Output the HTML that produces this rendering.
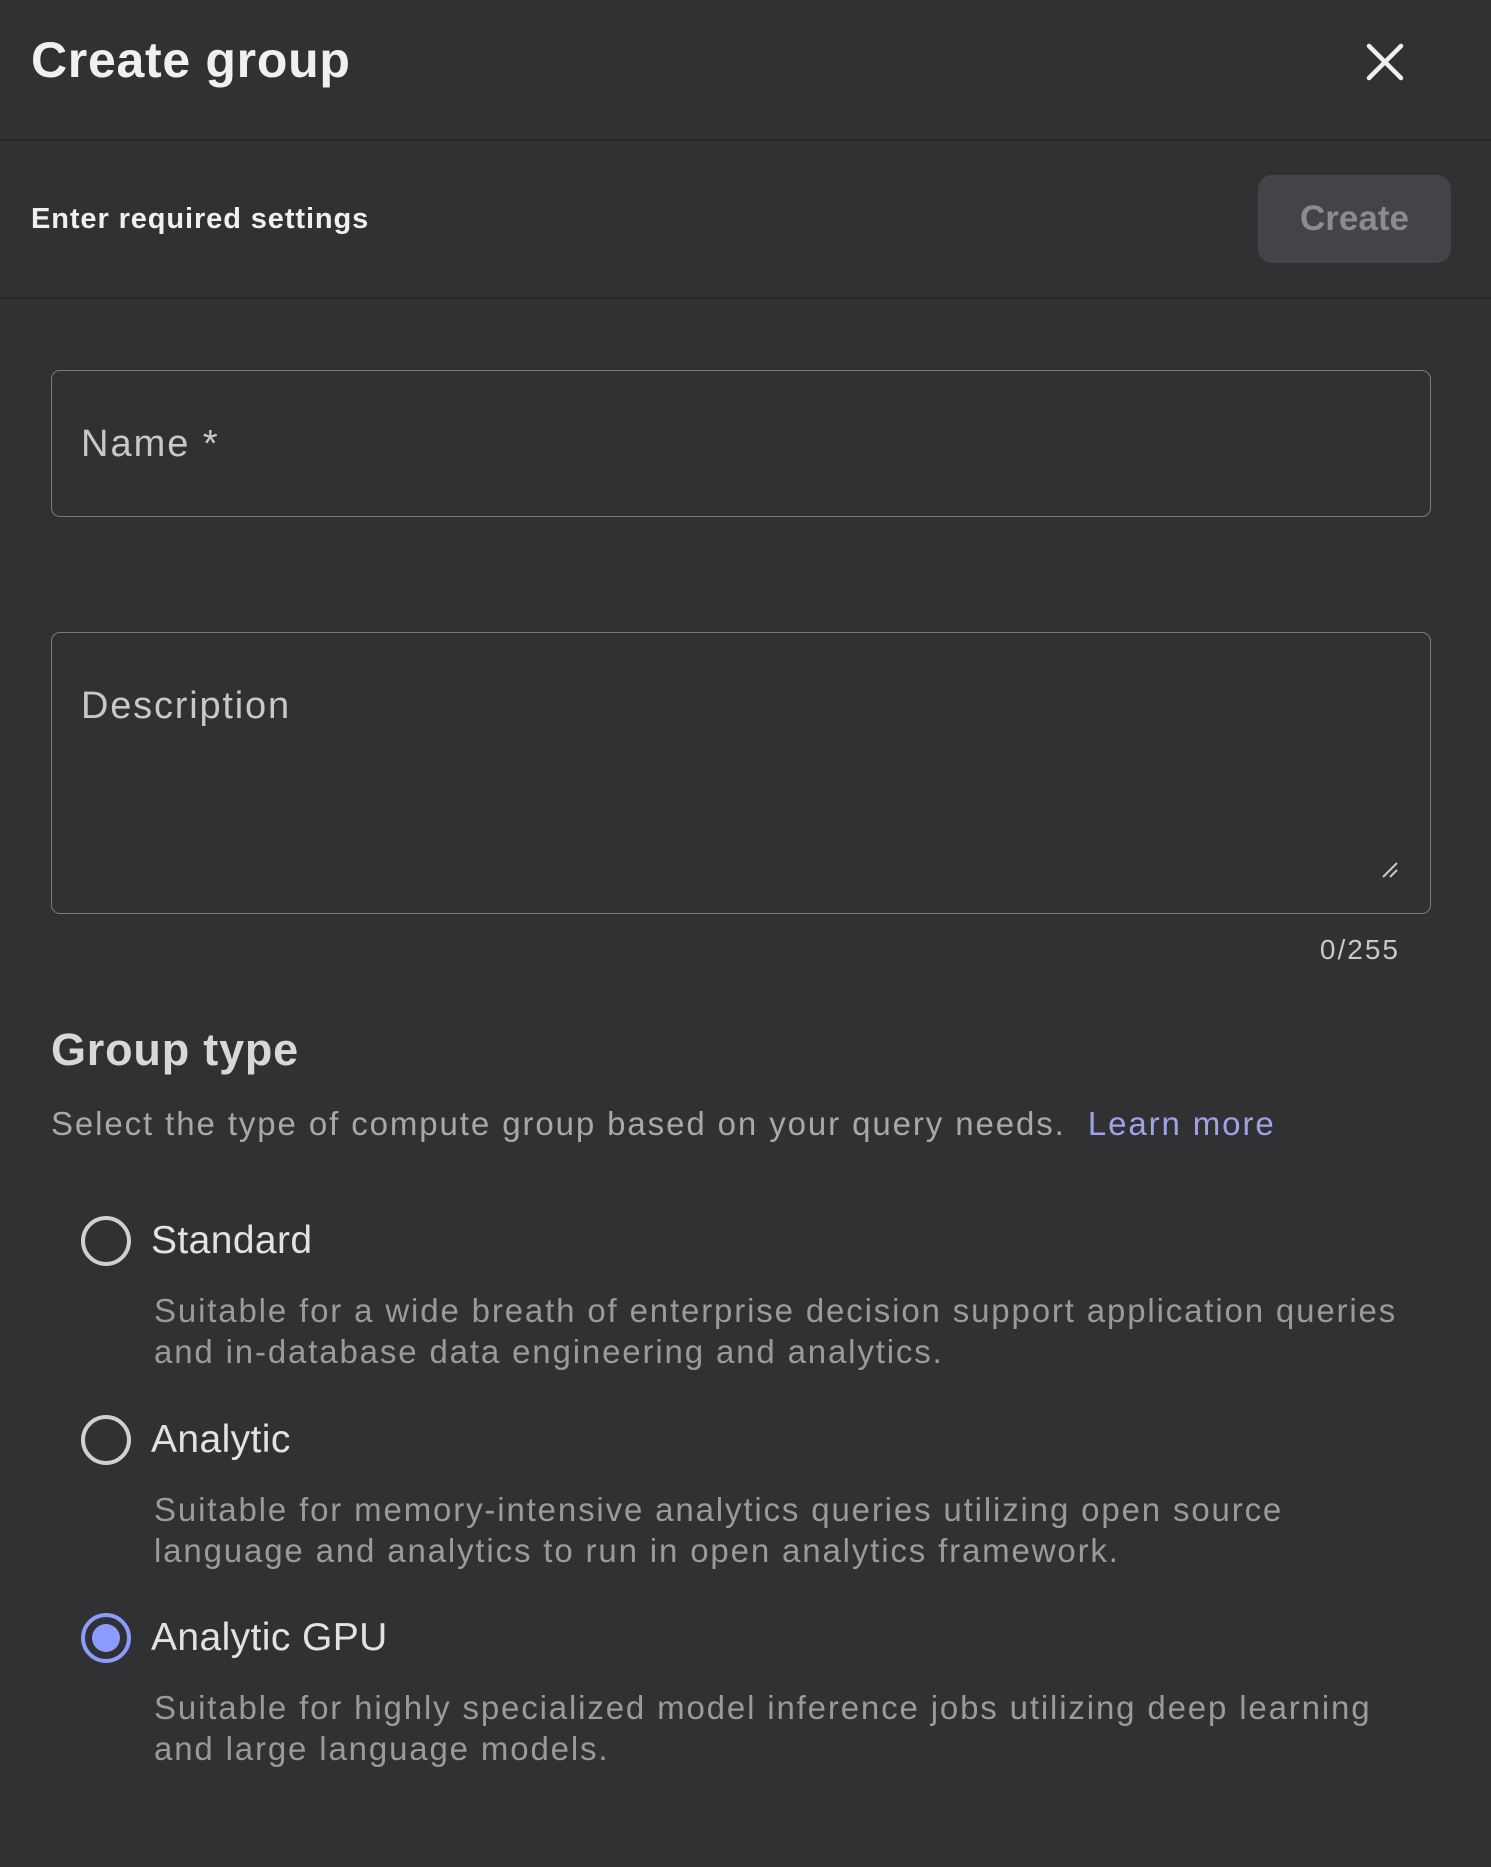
<!DOCTYPE html>
<html><head><meta charset="utf-8"><style>
html,body{margin:0;padding:0;}
body{width:1491px;height:1867px;background:#313133;font-family:"Liberation Sans",Arial,sans-serif;position:relative;overflow:hidden;color:#e8e8e8;}
.a{position:absolute;white-space:nowrap;}
.hr{position:absolute;left:0;width:1491px;height:2px;background:#28282a;}
.box{position:absolute;border:1.5px solid #7a7a7c;border-radius:9px;box-sizing:border-box;}
.radio{position:absolute;width:50px;height:50px;border-radius:50%;border:4px solid #d0d0d0;box-sizing:border-box;}
.lab{font-size:39px;color:#e2e2e2;letter-spacing:0.4px;}
.desc{font-size:33px;color:#9a9a9c;line-height:40.5px;letter-spacing:1.85px;}
</style></head><body>
<div class="a" style="left:31px;top:30px;font-size:50px;font-weight:bold;color:#f0f0f0;line-height:60px;letter-spacing:0.7px;">Create group</div>
<svg class="a" style="left:1366px;top:43px" width="38" height="38" viewBox="0 0 38 38"><path d="M3 3L35 35M35 3L3 35" stroke="#f0f0f0" stroke-width="4.5" stroke-linecap="round"/></svg>
<div class="hr" style="top:139px"></div>
<div class="a" style="left:31px;top:202px;font-size:29px;font-weight:bold;color:#f0f0f0;line-height:34px;letter-spacing:0.9px;">Enter required settings</div>
<div class="a" style="left:1258px;top:175px;width:193px;height:88px;border-radius:14px;background:#444348;color:#8c8c90;font-size:35px;font-weight:bold;text-align:center;line-height:88px;">Create</div>
<div class="hr" style="top:297px"></div>
<div class="box" style="left:51px;top:370px;width:1380px;height:147px;"></div>
<div class="a" style="left:81px;top:421px;font-size:38px;color:#c8c8c8;line-height:46px;letter-spacing:2px;">Name *</div>
<div class="box" style="left:51px;top:632px;width:1380px;height:282px;"></div>
<div class="a" style="left:81px;top:683px;font-size:38px;color:#c8c8c8;line-height:46px;letter-spacing:1.8px;">Description</div>
<svg class="a" style="left:1381px;top:861px" width="18" height="18" viewBox="0 0 18 18"><path d="M2 16L16 2M9 16L16 9" stroke="#c8c8c8" stroke-width="2"/></svg>
<div class="a" style="left:1290px;top:933px;width:110px;text-align:right;font-size:28px;color:#c8c8c8;line-height:34px;letter-spacing:2px;">0/255</div>
<div class="a" style="left:51px;top:1023px;font-size:45px;font-weight:bold;color:#d8d8d8;line-height:54px;letter-spacing:0.8px;">Group type</div>
<div class="a" style="left:51px;top:1104px;font-size:33px;color:#a8a8aa;line-height:40px;letter-spacing:1.9px;">Select the type of compute group based on your query needs.&nbsp; <span style="color:#9ea3e6">Learn more</span></div>

<div class="radio" style="left:81px;top:1216px;"></div>
<div class="a lab" style="left:151px;top:1218px;line-height:46px;">Standard</div>
<div class="a desc" style="left:154px;top:1291px;">Suitable for a wide breath of enterprise decision support application queries<br>and in-database data engineering and analytics.</div>

<div class="radio" style="left:81px;top:1415px;"></div>
<div class="a lab" style="left:151px;top:1417px;line-height:46px;">Analytic</div>
<div class="a desc" style="left:154px;top:1490px;">Suitable for memory-intensive analytics queries utilizing open source<br>language and analytics to run in open analytics framework.</div>

<div class="radio" style="left:81px;top:1613px;border-color:#8c9bff;"><div style="position:absolute;left:7px;top:7px;width:28px;height:28px;border-radius:50%;background:#8c9bff;"></div></div>
<div class="a lab" style="left:151px;top:1615px;line-height:46px;">Analytic GPU</div>
<div class="a desc" style="left:154px;top:1688px;">Suitable for highly specialized model inference jobs utilizing deep learning<br>and large language models.</div>
</body></html>
